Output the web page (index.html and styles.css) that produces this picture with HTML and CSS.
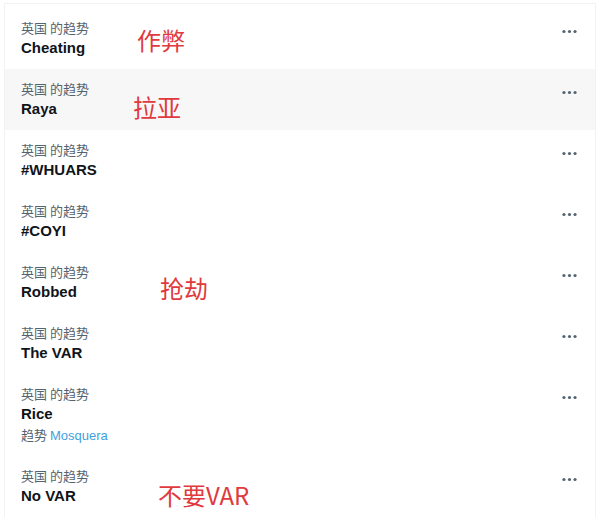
FILE: index.html
```html
<!DOCTYPE html>
<html lang="zh-CN">
<head>
  <meta charset="UTF-8">
  <title>趋势</title>
  <link rel="stylesheet" href="styles.css">
</head>
<body>
  <div class="trends">
    <div class="trend">
      <div class="trend-text">
        <span class="trend-meta">英国 的趋势</span>
        <span class="trend-name">Cheating</span>
      </div>
      <svg class="more" viewBox="0 0 24 24"><circle cx="5" cy="12" r="2"/><circle cx="12" cy="12" r="2"/><circle cx="19" cy="12" r="2"/></svg>
      <span class="note note-1">作弊</span>
    </div>
    <div class="trend trend-hover">
      <div class="trend-text">
        <span class="trend-meta">英国 的趋势</span>
        <span class="trend-name">Raya</span>
      </div>
      <svg class="more" viewBox="0 0 24 24"><circle cx="5" cy="12" r="2"/><circle cx="12" cy="12" r="2"/><circle cx="19" cy="12" r="2"/></svg>
      <span class="note note-2">拉亚</span>
    </div>
    <div class="trend">
      <div class="trend-text">
        <span class="trend-meta">英国 的趋势</span>
        <span class="trend-name">#WHUARS</span>
      </div>
      <svg class="more" viewBox="0 0 24 24"><circle cx="5" cy="12" r="2"/><circle cx="12" cy="12" r="2"/><circle cx="19" cy="12" r="2"/></svg>
    </div>
    <div class="trend">
      <div class="trend-text">
        <span class="trend-meta">英国 的趋势</span>
        <span class="trend-name">#COYI</span>
      </div>
      <svg class="more" viewBox="0 0 24 24"><circle cx="5" cy="12" r="2"/><circle cx="12" cy="12" r="2"/><circle cx="19" cy="12" r="2"/></svg>
    </div>
    <div class="trend">
      <div class="trend-text">
        <span class="trend-meta">英国 的趋势</span>
        <span class="trend-name">Robbed</span>
      </div>
      <svg class="more" viewBox="0 0 24 24"><circle cx="5" cy="12" r="2"/><circle cx="12" cy="12" r="2"/><circle cx="19" cy="12" r="2"/></svg>
      <span class="note note-3">抢劫</span>
    </div>
    <div class="trend">
      <div class="trend-text">
        <span class="trend-meta">英国 的趋势</span>
        <span class="trend-name">The VAR</span>
      </div>
      <svg class="more" viewBox="0 0 24 24"><circle cx="5" cy="12" r="2"/><circle cx="12" cy="12" r="2"/><circle cx="19" cy="12" r="2"/></svg>
    </div>
    <div class="trend">
      <div class="trend-text">
        <span class="trend-meta">英国 的趋势</span>
        <span class="trend-name">Rice</span>
        <span class="trend-meta trend-with">趋势 <a href="#">Mosquera</a></span>
      </div>
      <svg class="more" viewBox="0 0 24 24"><circle cx="5" cy="12" r="2"/><circle cx="12" cy="12" r="2"/><circle cx="19" cy="12" r="2"/></svg>
    </div>
    <div class="trend">
      <div class="trend-text">
        <span class="trend-meta">英国 的趋势</span>
        <span class="trend-name">No VAR</span>
      </div>
      <svg class="more" viewBox="0 0 24 24"><circle cx="5" cy="12" r="2"/><circle cx="12" cy="12" r="2"/><circle cx="19" cy="12" r="2"/></svg>
      <span class="note note-4">不要VAR</span>
    </div>
  </div>
</body>
</html>
```

FILE: styles.css
```css
body {
  margin: 0;
  padding: 3px 4px 0;
  background: #fff;
  font-family: "Liberation Sans", "Noto Sans CJK SC", sans-serif;
  color: #0f1419;
}
/* Lista de tendências */
.trends {
  display: flex;
  flex-direction: column;
  border: 1px solid #eff3f4;
  border-bottom: none;
  padding-top: 4px;
}
.trend {
  position: relative;
  display: flex;
  align-items: flex-start;
  justify-content: space-between;
  padding: 12px 16px 11px;
}
.trend-hover {
  background-color: #f7f7f7;
}
.trend-text {
  display: flex;
  flex-direction: column;
}
.trend-meta {
  font-family: "Noto Sans CJK SC", sans-serif;
  font-size: 13px;
  line-height: 16px;
  color: #536471;
}
.trend-name {
  margin-top: 2px;
  font-size: 15px;
  font-weight: bold;
  line-height: 20px;
  color: #0f1419;
}
.trend-with {
  margin-top: 2px;
  line-height: 18px;
}
.trend-with a {
  font-family: "Liberation Sans", sans-serif;
  color: #3f9fdd;
  text-decoration: none;
}
.more {
  width: 19px;
  height: 19px;
  margin-top: 2px;
  fill: #536471;
}
/* Anotações em vermelho */
.note {
  position: absolute;
  font-family: "Noto Sans CJK SC", sans-serif;
  font-size: 24px;
  line-height: 24px;
  color: #e0393e;
}
.note-1 { left: 132px; top: 20px; }
.note-2 { left: 128px; top: 26px; }
.note-3 { left: 155px; top: 24px; }
.note-4 { left: 153px; top: 27px; }
```
